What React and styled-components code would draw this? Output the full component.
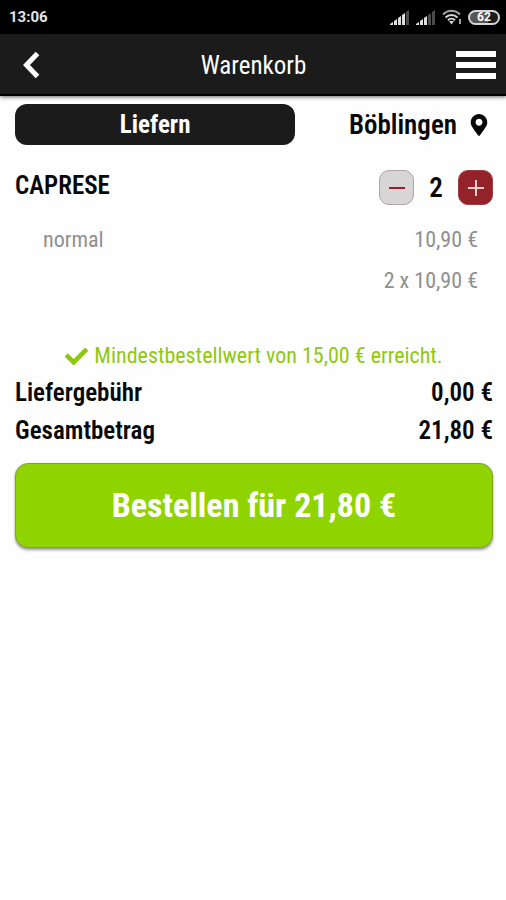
import React, { useState } from 'react';
import styled, { createGlobalStyle } from 'styled-components';
import { FaCheck, FaMapMarkerAlt } from 'react-icons/fa';

const GlobalStyle = createGlobalStyle`
  * {
    box-sizing: border-box;
  }

  body {
    margin: 0;
    background: #fefefe;
    color: #080808;
    font-family: 'Roboto Condensed', 'Liberation Sans Narrow', Roboto, sans-serif;
  }

  button {
    border: 0;
    padding: 0;
    font-family: inherit;
    cursor: pointer;
  }
`

// ------------------ Status bar ------------------

const StatusBar = styled.div`
  display: flex;
  align-items: center;
  justify-content: space-between;
  height: 34px;
  padding: 0 6px 0 9px;
  background: #000;
  color: #e4e4e4;
`

const Clock = styled.time`
  font-family: Roboto, sans-serif;
  font-size: 15px;
  font-weight: 700;
`

const StatusIcons = styled.div`
  display: flex;
  align-items: center;
  gap: 6px;
`

const Battery = styled.span`
  display: flex;
  align-items: center;
  justify-content: center;
  width: 32px;
  height: 15px;
  border: 2px solid #d6d6d6;
  border-radius: 8px;
  background: linear-gradient(to right, #555 65%, #1c1c1c 65%);
  color: #fff;
  font-family: Roboto, sans-serif;
  font-size: 12px;
  font-weight: 700;
  line-height: 12px;
`

// ------------------ Header ------------------

const Header = styled.header`
  display: grid;
  grid-template-columns: 48px 1fr 48px;
  align-items: center;
  height: 62px;
  padding: 0 6px 0 7px;
  background: #1b1b1b;
  box-shadow: inset 0 -2px #000, 0 1px 4px rgba(0, 0, 0, 0.6);
`

const HeaderButton = styled.button`
  display: flex;
  align-items: center;
  justify-content: center;
  height: 48px;
  background: none;
  color: #fff;
`

const Title = styled.h1`
  margin: 0;
  color: #fff;
  font-size: 25px;
  font-weight: 400;
  text-align: center;
`

// ------------------ Content ------------------

const Content = styled.main`
  padding: 8px 13px 24px 15px;
`

const DeliveryRow = styled.div`
  display: flex;
  align-items: center;
  justify-content: space-between;
  padding-right: 3px;
`

const DeliveryButton = styled.button`
  flex: 0 0 59%;
  height: 41px;
  border-radius: 12px;
  background: #1b1b1b;
  color: #fff;
  font-size: 25px;
  font-weight: 700;
`

const PlaceButton = styled.button`
  display: flex;
  align-items: center;
  gap: 11px;
  background: none;
  color: #080808;
  font-size: 27px;
  font-weight: 600;
`

const Item = styled.section`
  margin-top: 25px;
`

const ItemHeader = styled.div`
  display: flex;
  align-items: flex-start;
  justify-content: space-between;
  margin-bottom: 19px;
`

const ItemName = styled.h2`
  margin: 0;
  font-size: 25px;
  font-weight: 600;
  line-height: 32px;
`

const Stepper = styled.div`
  display: flex;
  align-items: center;
`

const StepButton = styled.button`
  display: flex;
  align-items: center;
  justify-content: center;
  width: 35px;
  height: 35px;
  border: 1px solid ${(props) => (props.$filled ? '#9d3d42' : '#b5a3a6')};
  border-radius: 10px;
  background: ${(props) => (props.$filled ? '#94222a' : '#d7d5d6')};
  color: ${(props) => (props.$filled ? '#f3cfcb' : '#94222a')};
`

const Amount = styled.output`
  width: 44px;
  font-size: 27px;
  font-weight: 600;
  line-height: 32px;
  text-align: center;
`

const ItemLine = styled.div`
  display: flex;
  justify-content: ${(props) => (props.$end ? 'flex-end' : 'space-between')};
  margin-bottom: 9px;
  padding: 0 15px 0 28px;
  color: #8f8f8f;
  font-size: 22px;
  line-height: 32px;
`

const MinimumNote = styled.p`
  display: flex;
  align-items: center;
  justify-content: center;
  gap: 6px;
  margin: 43px 0 2px;
  color: #8fc810;
  font-size: 22px;
  line-height: 32px;
`

const Totals = styled.dl`
  margin: 0;
`

const TotalRow = styled.div`
  display: flex;
  justify-content: space-between;
  font-size: 25px;
  font-weight: 600;
  line-height: 38px;

  dd {
    margin: 0;
  }
`

const OrderButton = styled.button`
  width: 100%;
  height: 85px;
  margin-top: 13px;
  padding-bottom: 2px;
  border: 1px solid #86a02a;
  border-radius: 13px;
  background: #8fd400;
  box-shadow: 0 2px 3px rgba(0, 0, 0, 0.4);
  color: #fff;
  font-size: 34px;
  font-weight: 700;
`

const SignalIcon = ({ level }) => (
  <svg width="20" height="15" viewBox="0 0 20 15" aria-hidden="true">
    {[0, 1, 2, 3, 4].map((bar) => (
      <path
        key={bar}
        d={`M${bar * 4} 15v${-1 - bar * 3}l3-2V15z`}
        fill={bar < level ? '#e0e0e0' : '#4a4a4a'}
      />
    ))}
  </svg>
)

const WifiIcon = () => (
  <svg width="20" height="16" viewBox="0 0 20 16" fill="none" stroke="#d6d6d6" strokeWidth="2" aria-hidden="true">
    <path d="M1 5.5C6 .5 13 .5 18 5.5" stroke="#a2a2a2" />
    <path d="M3.5 8.5c3.5-3.4 8.5-3.4 12 0" />
    <path d="M6 11.3c2-2 5-2 7 0" />
    <path d="M7 12h5l-2.5 3.5z" fill="#d6d6d6" stroke="none" />
    <path d="M18 10v5" strokeWidth="1.5" />
  </svg>
)

const price = (value) => `${value.toFixed(2).replace('.', ',')} €`

const Cart = () => {
  const [count, setCount] = useState(2);
  const unitPrice = 10.9;
  const total = price(count * unitPrice);

  return (
    <>
      <GlobalStyle />

      <StatusBar>
        <Clock>13:06</Clock>
        <StatusIcons>
          <SignalIcon level={4} />
          <SignalIcon level={3} />
          <WifiIcon />
          <Battery>62</Battery>
        </StatusIcons>
      </StatusBar>

      <Header>
        <HeaderButton aria-label="Zurück">
          <svg width="18" height="28" viewBox="0 0 18 28" fill="none" stroke="currentColor" strokeWidth="5">
            <path d="M15.5 2.5 4.5 14l11 11.5" />
          </svg>
        </HeaderButton>
        <Title>Warenkorb</Title>
        <HeaderButton aria-label="Menü">
          <svg width="40" height="28" viewBox="0 0 40 28" fill="currentColor">
            <rect width="40" height="6" y="0" />
            <rect width="40" height="6" y="11" />
            <rect width="40" height="6" y="22" />
          </svg>
        </HeaderButton>
      </Header>

      <Content>
        <DeliveryRow>
          <DeliveryButton>Liefern</DeliveryButton>
          <PlaceButton>
            Böblingen
            <FaMapMarkerAlt size={22} />
          </PlaceButton>
        </DeliveryRow>

        <Item>
          <ItemHeader>
            <ItemName>CAPRESE</ItemName>
            <Stepper>
              <StepButton aria-label="Weniger" onClick={() => setCount(Math.max(1, count - 1))}>
                <svg width="16" height="16" viewBox="0 0 16 16" stroke="currentColor" strokeWidth="2">
                  <path d="M0 8h16" />
                </svg>
              </StepButton>
              <Amount>{count}</Amount>
              <StepButton $filled aria-label="Mehr" onClick={() => setCount(count + 1)}>
                <svg width="16" height="16" viewBox="0 0 16 16" stroke="currentColor" strokeWidth="2">
                  <path d="M0 8h16M8 0v16" />
                </svg>
              </StepButton>
            </Stepper>
          </ItemHeader>
          <ItemLine>
            <span>normal</span>
            <span>{price(unitPrice)}</span>
          </ItemLine>
          <ItemLine $end>
            <span>{count} x {price(unitPrice)}</span>
          </ItemLine>
        </Item>

        <MinimumNote>
          <FaCheck size={23} />
          Mindestbestellwert von 15,00 € erreicht.
        </MinimumNote>

        <Totals>
          <TotalRow>
            <dt>Liefergebühr</dt>
            <dd>0,00 €</dd>
          </TotalRow>
          <TotalRow>
            <dt>Gesamtbetrag</dt>
            <dd>{total}</dd>
          </TotalRow>
        </Totals>

        <OrderButton>Bestellen für {total}</OrderButton>
      </Content>
    </>
  );
};

export default Cart;
